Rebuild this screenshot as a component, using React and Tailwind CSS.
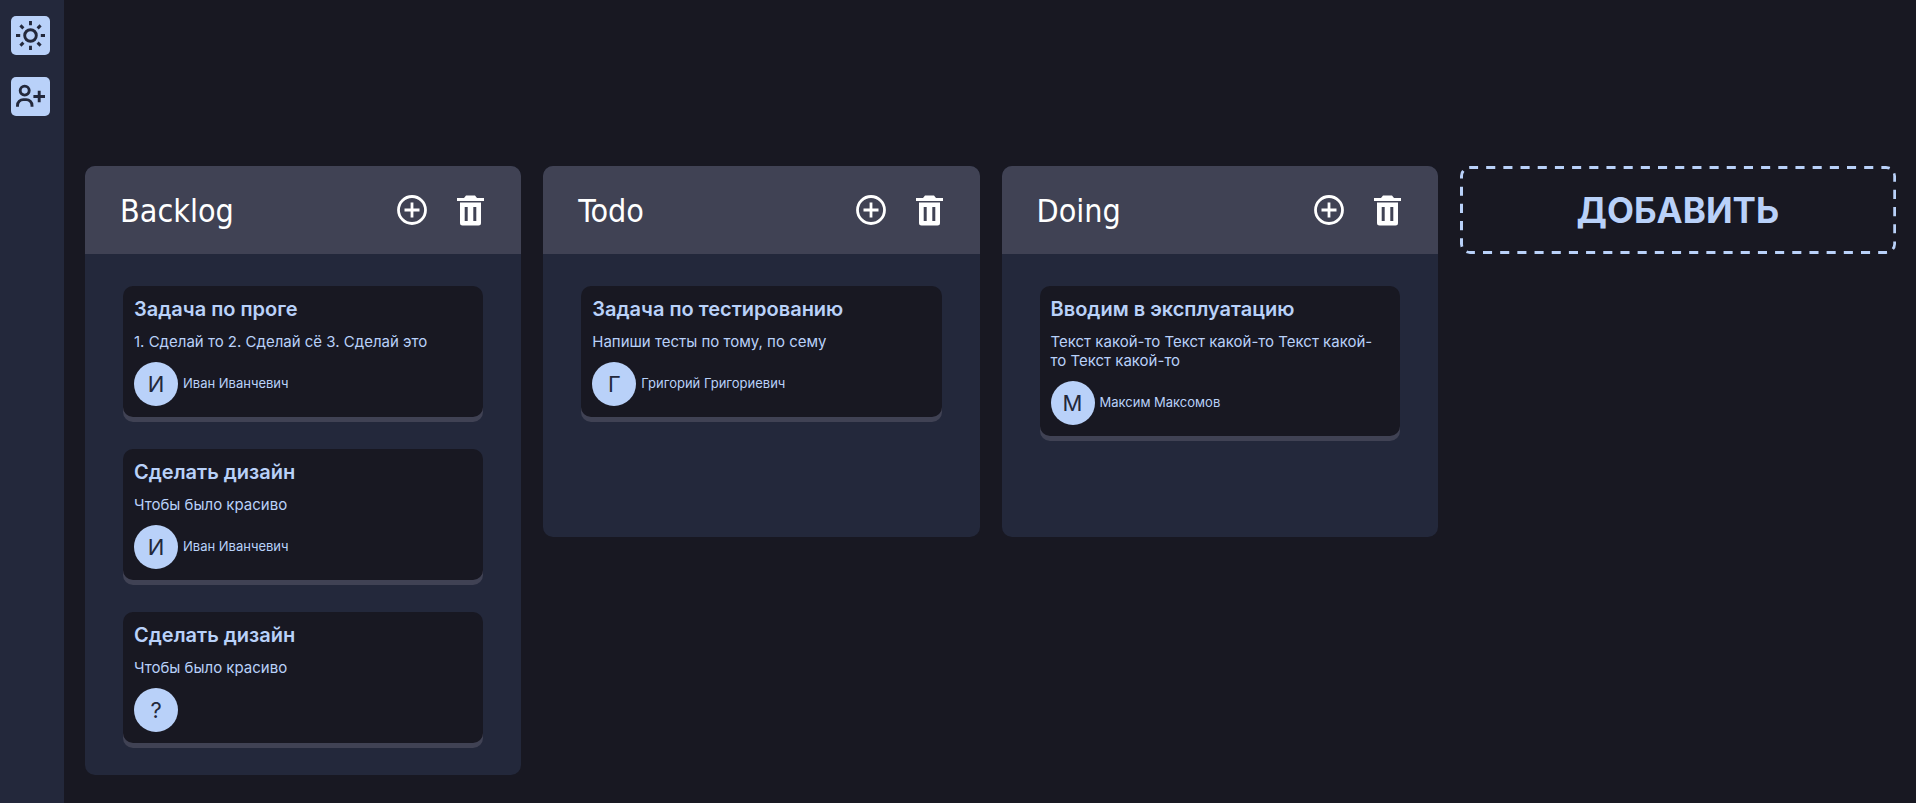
const columns = [
  {
    title: "Backlog",
    tasks: [
      { title: "Задача по проге", text: "1. Сделай то 2. Сделай сё 3. Сделай это", user: "Иван Иванчевич" },
      { title: "Сделать дизайн", text: "Чтобы было красиво", user: "Иван Иванчевич" },
      { title: "Сделать дизайн", text: "Чтобы было красиво", user: "" },
    ],
  },
  {
    title: "Todo",
    tasks: [{ title: "Задача по тестированию", text: "Напиши тесты по тому, по сему", user: "Григорий Григориевич" }],
  },
  {
    title: "Doing",
    tasks: [
      {
        title: "Вводим в эксплуатацию",
        text: "Текст какой-то Текст какой-то Текст какой-то Текст какой-то",
        user: "Максим Максомов",
      },
    ],
  },
];

function SunIcon() {
  return (
    <svg viewBox="0 0 29 29" className="size-[29px]" fill="none" stroke="currentColor" strokeWidth="2.9" aria-hidden="true">
      <circle cx="14.5" cy="14.5" r="5.8" />
      <path d="M14.5 0v4.2M14.5 24.8V29M0 14.5h4.2M24.8 14.5H29M4.4 4.4l3 3M21.6 21.6l3 3M4.4 24.6l3-3M21.6 7.4l3-3" />
    </svg>
  );
}

function UserPlusIcon() {
  return (
    <svg viewBox="0 0 29 29" className="size-[29px]" fill="none" stroke="currentColor" strokeWidth="2.9" aria-hidden="true">
      <circle cx="8.7" cy="8.6" r="4.5" />
      <path d="M1.5 24.800v-1.400a5.800 5.800 0 0 1 5.800-5.800h2.900a5.800 5.800 0 0 1 5.800 5.800v1.400M23.200 8.700v11.600M17.400 14.500H29" />
    </svg>
  );
}

function PlusCircleIcon() {
  return (
    <svg viewBox="0 0 30 30" className="size-[30px]" fill="none" stroke="currentColor" strokeWidth="2.8" aria-hidden="true">
      <circle cx="15" cy="15" r="13.5" />
      <path d="M15 7.500v15M7.500 15h15" />
    </svg>
  );
}

function TrashIcon() {
  return (
    <svg viewBox="0 0 27 31" className="h-[31px] w-[27px]" fill="currentColor" aria-hidden="true">
      <path d="M0 3h7L9 .500h9L20 3h7v3H0z" />
      <path fillRule="evenodd" d="M3 7.500h21v20.500a2.500 2.500 0 0 1-2.500 2.500h-16A2.500 2.500 0 0 1 3 28zM7.700 12v14h3V12zM16.300 12v14h3V12z" />
    </svg>
  );
}

function Task({ title, text, user }) {
  return (
    <article className="rounded-[10px] bg-[#181822] p-[11px] text-[#b9d1f9] shadow-[0_5px_0_#404254]">
      <h3 className="text-xl leading-6 font-semibold">{title}</h3>
      <p className="mt-[11px] pr-2 text-[15px] leading-[19px]">{text}</p>
      <div className="mt-[11px] flex items-center gap-[5px]">
        <span className="flex size-11 shrink-0 items-center justify-center rounded-full bg-[#b9d1f9] text-[22px] text-[#23283b]">
          {user ? user[0] : "?"}
        </span>
        <span className="text-[13px]">{user}</span>
      </div>
    </article>
  );
}

function Column({ title, tasks }) {
  return (
    <section className="min-h-[371px] overflow-hidden rounded-[10px] bg-[#23283b]">
      <header className="flex h-22 items-center justify-between bg-[#404254] pr-[37px] pl-[35px] text-white">
        <h2 className="pt-0.5 font-['DejaVu_Sans_Condensed','Noto_Sans',sans-serif] text-[32px] leading-10">{title}</h2>
        <div className="flex items-center gap-[30px]">
          <button type="button" aria-label="Добавить задачу"><PlusCircleIcon /></button>
          <button type="button" aria-label="Удалить колонку"><TrashIcon /></button>
        </div>
      </header>
      <div className="flex flex-col gap-8 px-[38px] py-8">
        {tasks.map((task, i) => <Task key={i} {...task} />)}
      </div>
    </section>
  );
}

/* The stroke is centred on the edge; the outer half is clipped, leaving a 3px dashed line. */
function DashedOutline() {
  return (
    <svg className="absolute inset-0 size-full overflow-hidden rounded-[10px]" fill="none" stroke="currentColor" strokeWidth="6" aria-hidden="true">
      <rect width="100%" height="100%" rx="10" pathLength="1020" strokeDasharray="9 8" strokeDashoffset="1" />
    </svg>
  );
}

export default function App() {
  return (
    <div className="flex min-h-screen bg-[#181822] font-['Inter',sans-serif]">
      <aside className="flex w-16 shrink-0 flex-col items-start gap-[22px] bg-[#23283b] px-[11px] py-4">
        <button type="button" aria-label="Сменить тему" className="flex size-[39px] items-center justify-center rounded-[5px] bg-[#b9d1f9] text-[#23283b]">
          <SunIcon />
        </button>
        <button type="button" aria-label="Добавить пользователя" className="flex size-[39px] items-center justify-center rounded-[5px] bg-[#b9d1f9] text-[#23283b]">
          <UserPlusIcon />
        </button>
      </aside>
      <main className="grid flex-1 grid-cols-4 items-start gap-[22px] pt-[166px] pr-5 pb-5 pl-[21px]">
        {columns.map((column) => <Column key={column.title} {...column} />)}
        <button type="button" className="relative h-22 rounded-[10px] text-[35px] font-bold text-[#b9d1f9]">
          <DashedOutline />
          ДОБАВИТЬ
        </button>
      </main>
    </div>
  );
}
